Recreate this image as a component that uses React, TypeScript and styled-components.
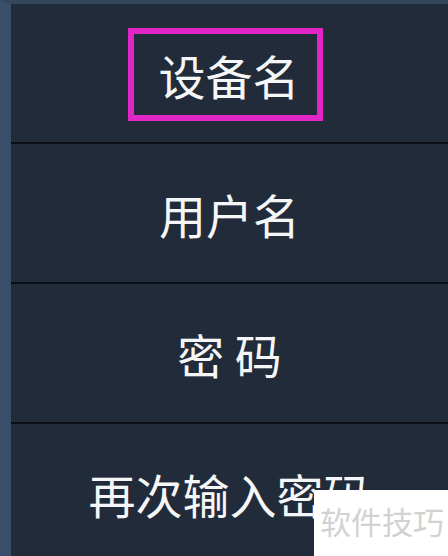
import React, { FC } from "react";
import styled, { createGlobalStyle } from "styled-components";

const GlobalStyle = createGlobalStyle`
  html, body {
    margin: 0;
    padding: 0;
    background: #222b39;
    overflow: hidden;
  }
  body {
    font-family: "Noto Sans CJK SC", "Noto Sans", sans-serif;
  }
`;

const Screen = styled.div`
  position: relative;
  width: 448px;
  height: 556px;
  overflow: hidden;
  box-sizing: border-box;
  background: #222b39;
  border-left: 11px solid #3a4e69;
  border-top: 4px solid #34465e;
  display: flex;
  flex-direction: column;
`;

const Row = styled.div`
  flex: 0 0 auto;
  height: 138px;
  border-bottom: 2px solid #0a0f17;
  display: flex;
  align-items: center;
  justify-content: center;
  color: #f5f6f7;
  font-size: 47px;
  font-weight: 400;
  line-height: 1;
`;

const Highlight = styled.span<{ $active: boolean }>`
  display: inline-flex;
  align-items: center;
  justify-content: center;
  box-sizing: border-box;
  ${({ $active }) =>
    $active
      ? `
    width: 195px;
    height: 93px;
    padding-left: 7px;
    border: 6px solid #e125c7;
    margin-left: -8px;
    margin-top: 2px;
  `
      : ""}
`;

const Watermark = styled.div`
  position: absolute;
  right: 0;
  bottom: 0;
  width: 134px;
  height: 66px;
  background: #ffffff;
  color: #d2d2d2;
  font-size: 31px;
  line-height: 1;
  display: flex;
  align-items: center;
  padding-left: 6px;
  padding-bottom: 6px;
  box-sizing: border-box;
  white-space: nowrap;
`;

const fields = [
  { label: "设备名", active: true },
  { label: "用户名", active: false },
  { label: "密 码", active: false },
  { label: "再次输入密码", active: false },
];

const App: FC = () => (
  <>
    <GlobalStyle />
    <Screen>
      {fields.map((f) => (
        <Row key={f.label}>
          <Highlight $active={f.active}>{f.label}</Highlight>
        </Row>
      ))}
      <Watermark>软件技巧</Watermark>
    </Screen>
  </>
);

export default App;
